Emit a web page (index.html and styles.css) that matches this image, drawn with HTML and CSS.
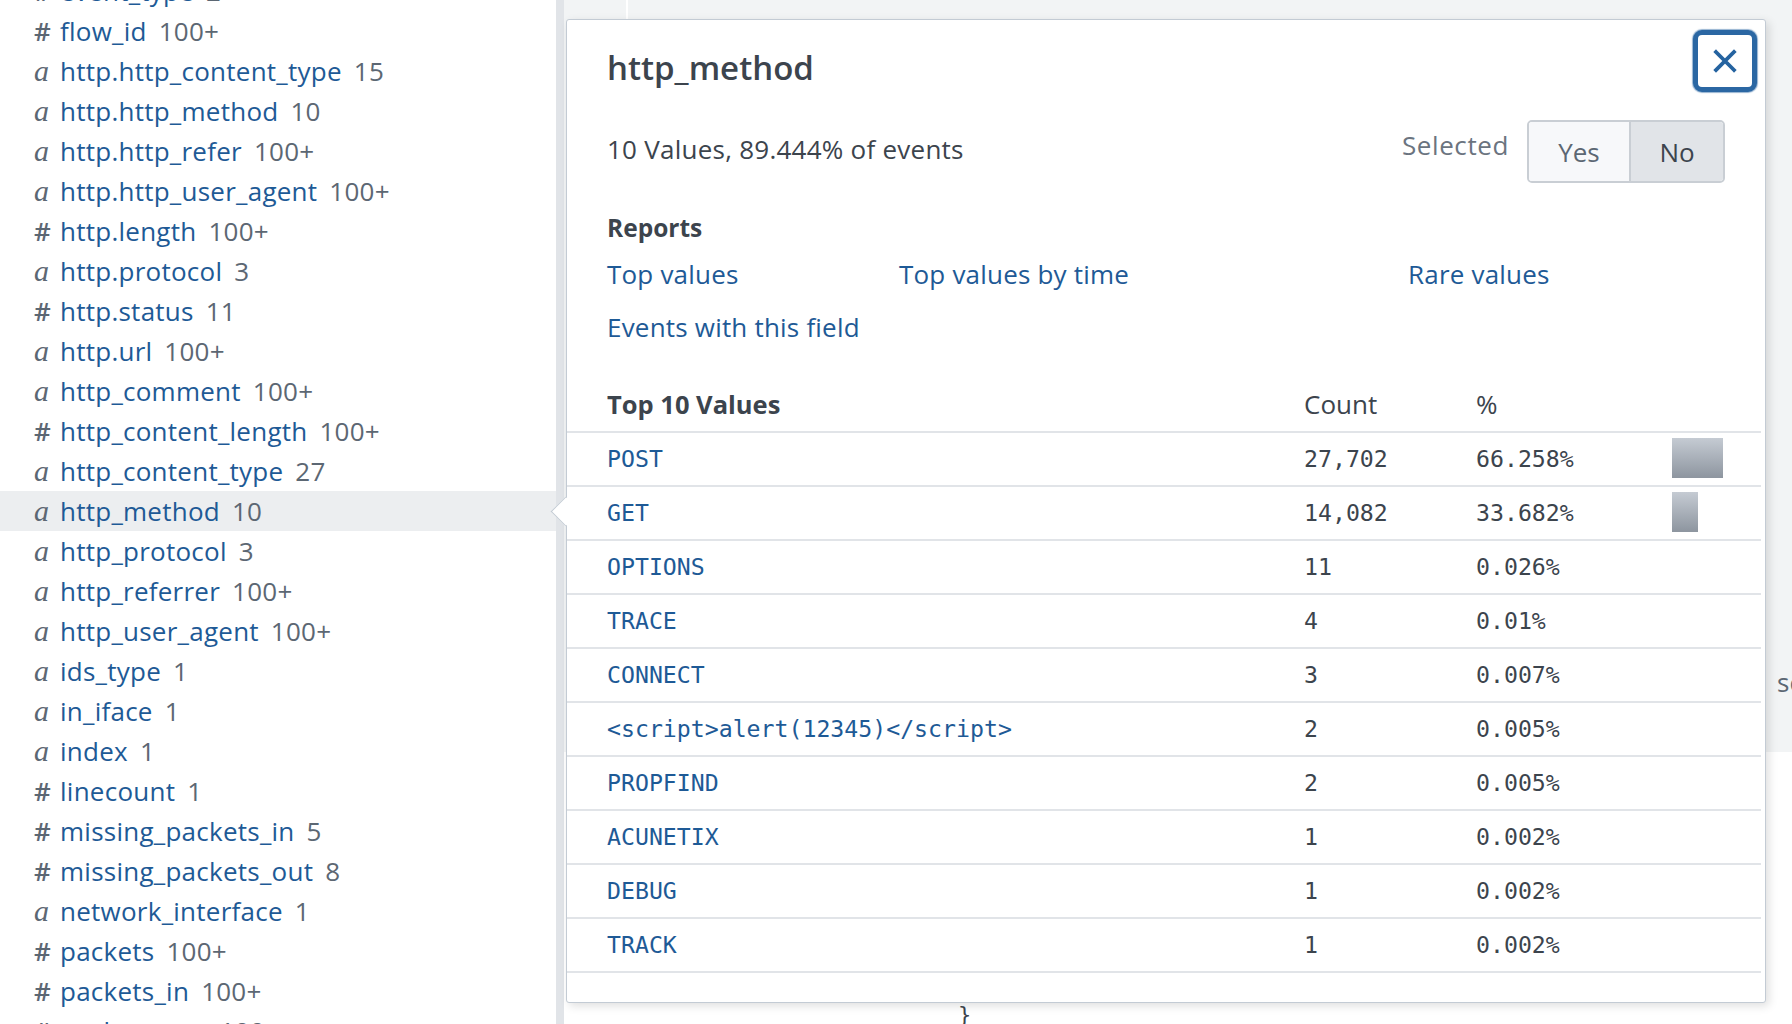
FILE: index.html
```html
<!DOCTYPE html>
<html lang="en">
<head>
<meta charset="utf-8">
<title>http_method</title>
<link rel="stylesheet" href="styles.css">
</head>
<body>
<div class="app">
  <aside class="fields">
    <ul class="field-list">
      <li class="field"><span class="ftype num">#</span><span class="fname">event_type</span><span class="fcount">2</span></li>
      <li class="field"><span class="ftype num">#</span><span class="fname">flow_id</span><span class="fcount">100+</span></li>
      <li class="field"><span class="ftype str">a</span><span class="fname">http.http_content_type</span><span class="fcount">15</span></li>
      <li class="field"><span class="ftype str">a</span><span class="fname">http.http_method</span><span class="fcount">10</span></li>
      <li class="field"><span class="ftype str">a</span><span class="fname">http.http_refer</span><span class="fcount">100+</span></li>
      <li class="field"><span class="ftype str">a</span><span class="fname">http.http_user_agent</span><span class="fcount">100+</span></li>
      <li class="field"><span class="ftype num">#</span><span class="fname">http.length</span><span class="fcount">100+</span></li>
      <li class="field"><span class="ftype str">a</span><span class="fname">http.protocol</span><span class="fcount">3</span></li>
      <li class="field"><span class="ftype num">#</span><span class="fname">http.status</span><span class="fcount">11</span></li>
      <li class="field"><span class="ftype str">a</span><span class="fname">http.url</span><span class="fcount">100+</span></li>
      <li class="field"><span class="ftype str">a</span><span class="fname">http_comment</span><span class="fcount">100+</span></li>
      <li class="field"><span class="ftype num">#</span><span class="fname">http_content_length</span><span class="fcount">100+</span></li>
      <li class="field"><span class="ftype str">a</span><span class="fname">http_content_type</span><span class="fcount">27</span></li>
      <li class="field active"><span class="ftype str">a</span><span class="fname">http_method</span><span class="fcount">10</span></li>
      <li class="field"><span class="ftype str">a</span><span class="fname">http_protocol</span><span class="fcount">3</span></li>
      <li class="field"><span class="ftype str">a</span><span class="fname">http_referrer</span><span class="fcount">100+</span></li>
      <li class="field"><span class="ftype str">a</span><span class="fname">http_user_agent</span><span class="fcount">100+</span></li>
      <li class="field"><span class="ftype str">a</span><span class="fname">ids_type</span><span class="fcount">1</span></li>
      <li class="field"><span class="ftype str">a</span><span class="fname">in_iface</span><span class="fcount">1</span></li>
      <li class="field"><span class="ftype str">a</span><span class="fname">index</span><span class="fcount">1</span></li>
      <li class="field"><span class="ftype num">#</span><span class="fname">linecount</span><span class="fcount">1</span></li>
      <li class="field"><span class="ftype num">#</span><span class="fname">missing_packets_in</span><span class="fcount">5</span></li>
      <li class="field"><span class="ftype num">#</span><span class="fname">missing_packets_out</span><span class="fcount">8</span></li>
      <li class="field"><span class="ftype str">a</span><span class="fname">network_interface</span><span class="fcount">1</span></li>
      <li class="field"><span class="ftype num">#</span><span class="fname">packets</span><span class="fcount">100+</span></li>
      <li class="field"><span class="ftype num">#</span><span class="fname">packets_in</span><span class="fcount">100+</span></li>
      <li class="field"><span class="ftype num">#</span><span class="fname">packets_out</span><span class="fcount">100+</span></li>
    </ul>
  </aside>
  <div class="gutter"></div>
  <main class="results">
    <div class="results-top">
      <div class="tabline"></div>
      <div class="peek">search</div>
    </div>
    <div class="results-bottom"><span class="brace">}</span></div>

    <section class="popover">
      <span class="arrow"></span>
      <button class="close" aria-label="Close">
        <svg width="26" height="26" viewBox="0 0 26 26"><path d="M4 4 L22 22 M22 4 L4 22" stroke="#2563a0" stroke-width="3.8" stroke-linecap="square" fill="none"/></svg>
      </button>
      <div class="pop-head">
        <h2 class="pop-title">http_method</h2>
      </div>
      <div class="stats">
        <div class="stats-text">10 Values, 89.444% of events</div>
        <div class="selected">
          <span class="sel-label">Selected</span>
          <div class="toggle">
            <span class="opt yes">Yes</span>
            <span class="opt no">No</span>
          </div>
        </div>
      </div>
      <div class="reports">
        <h3 class="reports-title">Reports</h3>
        <div class="links">
          <a class="link">Top values</a>
          <a class="link">Top values by time</a>
          <a class="link">Rare values</a>
          <a class="link">Events with this field</a>
        </div>
      </div>
      <div class="values">
        <div class="vrow vhead">
          <span class="h-name">Top 10 Values</span>
          <span>Count</span>
          <span>%</span>
          <span></span>
        </div>
        <div class="vrow"><span class="v-name">POST</span><span class="v-num">27,702</span><span class="v-num">66.258%</span><span class="bar-cell"><span class="bar" style="width:51px"></span></span></div>
        <div class="vrow"><span class="v-name">GET</span><span class="v-num">14,082</span><span class="v-num">33.682%</span><span class="bar-cell"><span class="bar" style="width:26px"></span></span></div>
        <div class="vrow"><span class="v-name">OPTIONS</span><span class="v-num">11</span><span class="v-num">0.026%</span><span class="bar-cell"></span></div>
        <div class="vrow"><span class="v-name">TRACE</span><span class="v-num">4</span><span class="v-num">0.01%</span><span class="bar-cell"></span></div>
        <div class="vrow"><span class="v-name">CONNECT</span><span class="v-num">3</span><span class="v-num">0.007%</span><span class="bar-cell"></span></div>
        <div class="vrow"><span class="v-name">&lt;script&gt;alert(12345)&lt;/script&gt;</span><span class="v-num">2</span><span class="v-num">0.005%</span><span class="bar-cell"></span></div>
        <div class="vrow"><span class="v-name">PROPFIND</span><span class="v-num">2</span><span class="v-num">0.005%</span><span class="bar-cell"></span></div>
        <div class="vrow"><span class="v-name">ACUNETIX</span><span class="v-num">1</span><span class="v-num">0.002%</span><span class="bar-cell"></span></div>
        <div class="vrow"><span class="v-name">DEBUG</span><span class="v-num">1</span><span class="v-num">0.002%</span><span class="bar-cell"></span></div>
        <div class="vrow"><span class="v-name">TRACK</span><span class="v-num">1</span><span class="v-num">0.002%</span><span class="bar-cell"></span></div>
      </div>
    </section>
  </main>
</div>
</body>
</html>
```

FILE: styles.css
```css
* { box-sizing: border-box; }

html, body {
  margin: 0;
  padding: 0;
}

body {
  width: 1792px;
  height: 1024px;
  overflow: hidden;
  background: #ffffff;
  font-family: "Open Sans", "Noto Sans", sans-serif;
  color: #3c444d;
}

.app {
  display: flex;
  height: 1024px;
}

/* ---------- field sidebar ---------- */
.fields {
  width: 556px;
  flex: none;
  overflow: hidden;
  background: #ffffff;
}

.field-list {
  list-style: none;
  margin: -29px 0 0;
  padding: 0;
}

.field {
  height: 40px;
  display: flex;
  align-items: center;
  padding-left: 34px;
  font-size: 26px;
  letter-spacing: 0.25px;
  color: #1e5a96;
  white-space: nowrap;
}

.field.active {
  background: #eceef0;
}

.ftype {
  width: 26px;
  flex: none;
  color: #5c6773;
  letter-spacing: 0;
}

.ftype.str {
  font-family: "Liberation Serif", "DejaVu Serif", serif;
  font-style: italic;
  font-size: 30px;
}

.ftype.num {
  font-size: 26px;
  font-weight: 600;
}

.fcount {
  color: #5c6773;
  margin-left: 12px;
}

.gutter {
  width: 8px;
  flex: none;
  background: #e1e4e8;
}

/* ---------- results behind popover ---------- */
.results {
  flex: 1;
  min-width: 0;
  position: relative;
  display: flex;
  flex-direction: column;
}

.results-top {
  height: 752px;
  flex: none;
  overflow: hidden;
  background: #f2f4f5;
  display: flex;
  flex-direction: column;
  justify-content: space-between;
  padding-bottom: 50px;
}

.tabline {
  width: 2px;
  height: 20px;
  margin-left: 62px;
  background: #ffffff;
}

.peek {
  padding-left: 1213px;
  font-size: 26px;
  line-height: 40px;
  color: #5c6773;
  white-space: nowrap;
}

.results-bottom {
  flex: 1;
  overflow: hidden;
  padding-left: 394px;
  padding-top: 248px;
  font-family: "DejaVu Sans Mono", monospace;
  font-size: 22px;
  line-height: 30px;
  color: #3c444d;
}

/* ---------- popover ---------- */
.popover {
  position: absolute;
  left: 2px;
  top: 19px;
  width: 1200px;
  height: 984px;
  background: #ffffff;
  border: 1px solid #c3cbd4;
  border-radius: 3px;
  box-shadow: 3px 3px 10px rgba(0, 0, 0, 0.13);
}

.arrow {
  position: absolute;
  left: -12px;
  top: 481px;
  width: 21px;
  height: 21px;
  background: #ffffff;
  border-left: 1px solid #c3cbd4;
  border-bottom: 1px solid #c3cbd4;
  transform: rotate(45deg);
}

.close {
  position: absolute;
  top: 10px;
  right: 8px;
  width: 64px;
  height: 62px;
  border: 5px solid #2b67a3;
  border-radius: 9px;
  background: #ffffff;
  box-shadow: 0 0 1px 1px rgba(43, 103, 163, 0.5);
  display: flex;
  align-items: center;
  justify-content: center;
  padding: 0;
}

.pop-head {
  padding: 28px 40px 0;
}

.pop-title {
  margin: 0;
  font-size: 33px;
  font-weight: 600;
  line-height: 40px;
  color: #3c444d;
}

.stats {
  display: flex;
  align-items: center;
  justify-content: space-between;
  margin-top: 32px;
  padding: 0 40px;
  height: 63px;
}

.stats-text {
  font-size: 26px;
  letter-spacing: 0.25px;
  color: #3c444d;
  margin-bottom: 6px;
}

.selected {
  display: flex;
  align-items: center;
  gap: 18px;
}

.sel-label {
  font-size: 26px;
  letter-spacing: 0.6px;
  color: #6b7480;
  margin-bottom: 14px;
}

.toggle {
  display: flex;
  height: 63px;
  border: 2px solid #c9ced4;
  border-radius: 5px;
  overflow: hidden;
}

.opt {
  display: flex;
  align-items: center;
  justify-content: center;
  font-size: 26px;
}

.opt.yes {
  width: 100px;
  background: #f7f8fa;
  color: #5c6773;
}

.opt.no {
  width: 94px;
  background: #e1e4e8;
  color: #3c444d;
  border-left: 2px solid #c9ced4;
}

.reports {
  padding: 0 40px;
  margin-top: 29px;
}

.reports-title {
  margin: 0;
  font-size: 24.5px;
  font-weight: 700;
  line-height: 32px;
  color: #3c444d;
}

.links {
  display: grid;
  grid-template-columns: 292px 509px auto;
  row-gap: 21px;
  margin-top: 14px;
  font-size: 26px;
  letter-spacing: 0.2px;
  line-height: 32px;
}

.link {
  color: #1e5a96;
  white-space: nowrap;
}

.values {
  margin-top: 36px;
  margin-right: 4px;
}

.vrow {
  display: grid;
  grid-template-columns: 697px 172px 196px 1fr;
  align-items: center;
  height: 54px;
  padding-left: 40px;
  padding-bottom: 2px;
  border-bottom: 2px solid #e1e4e8;
  font-family: "DejaVu Sans Mono", "Liberation Mono", monospace;
  font-size: 23.2px;
}

.vhead {
  font-family: "Open Sans", "Noto Sans", sans-serif;
  font-size: 26px;
  color: #3c444d;
}

.h-name {
  font-weight: 700;
  font-size: 25.5px;
}

.v-name {
  color: #1e5a96;
  white-space: nowrap;
}

.v-num {
  color: #3c444d;
}

.bar-cell {
  display: flex;
  align-items: center;
  height: 40px;
}

.bar {
  display: block;
  height: 40px;
  background: linear-gradient(#c5cbd3, #8d959f);
}
```
